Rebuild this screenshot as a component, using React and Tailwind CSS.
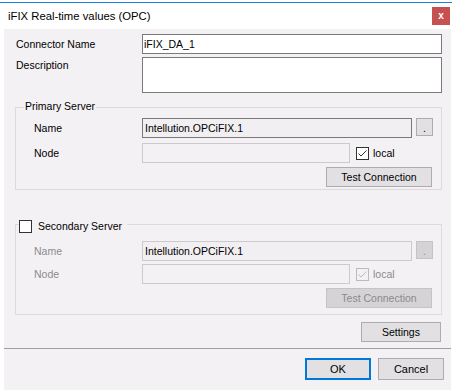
import React from "react";

const FONT = "font-['Liberation_Sans',Arial,sans-serif]";

function Check({ checked, disabled }) {
  const c = disabled ? "#bdbabd" : "#333333";
  return (
    <svg width="13" height="13" viewBox="0 0 13 13" className="shrink-0">
      <rect x="0.5" y="0.5" width="12" height="12" fill={disabled ? "#f4f1f4" : "#ffffff"} stroke={c} />
      {checked && (
        <path d="M2.5 6.5 L5 9 L10.5 3.5" fill="none" stroke={disabled ? "#bdbabd" : "#333333"} strokeWidth="1" />
      )}
    </svg>
  );
}

function Btn({ children, disabled, className = "" }) {
  return (
    <div
      className={
        "flex items-center justify-center border " +
        (disabled
          ? "bg-[#d6d3d6] border-[#c6c3c6] text-[#8c8a8c] "
          : "bg-[#e3e0e3] border-[#adadad] text-black ") +
        className
      }
    >
      {children}
    </div>
  );
}

function ServerRows({ disabled }) {
  const lbl = disabled ? "text-[#8c8a8c]" : "text-black";
  const nameBorder = disabled ? "border-[#cccacc]" : "border-[#7a7a7a]";
  return (
    <>
      <div className="flex items-start h-[20px]">
        <span className={"w-[108px] leading-[20px] " + lbl}>Name</span>
        <div
          className={
            "w-[270px] h-[20px] border bg-[#f2eff2] pl-[2px] flex items-center text-black " + nameBorder
          }
        >
          Intellution.OPCiFIX.1
        </div>
        <Btn disabled={disabled} className="ml-[4px] w-[17px] h-[18px] !items-end pb-[2px] leading-none">
          .
        </Btn>
      </div>
      <div className={"flex items-center h-[20px] " + (disabled ? "mt-[3px]" : "mt-[5px]")}>
        <span className={"w-[108px] " + lbl}>Node</span>
        <div className="w-[208px] h-[20px] border border-[#cccacc] bg-[#f4f1f4]" />
        <div className="ml-[6px] flex items-center gap-[4px]">
          <Check checked disabled={disabled} />
          <span className={lbl}>local</span>
        </div>
      </div>
      <div className="mt-[4px] flex justify-end pr-[9px]">
        <Btn disabled={disabled} className="w-[106px] h-[20px]">
          Test Connection
        </Btn>
      </div>
    </>
  );
}

export default function App() {
  return (
    <div className={"w-[455px] h-[390px] bg-white overflow-hidden text-[10.5px] leading-[13px] " + FONT}>
      <div className="h-[2px] w-[452px] bg-white" />
      <div className="h-[1px] w-[452px] bg-[#1883d7]" />
      <div className="h-[26px] w-[452px] flex items-center justify-between pl-[8px] pr-[2px]">
        <span className="text-[11.3px] text-black">iFIX Real-time values (OPC)</span>
        <div className="w-[18px] h-[18px] bg-[#c75050] flex items-center justify-center text-white font-bold text-[10px] leading-none pb-[1px]">
          x
        </div>
      </div>
      <div className="ml-[4px] w-[447px] h-[361px] bg-[#f4f1f4] pt-[5px]">
        <div className="ml-[11px] w-[427px]">
          <div className="flex items-center h-[20px]">
            <span className="w-[127px] pl-[1px] text-black">Connector Name</span>
            <div className="w-[300px] h-[20px] border border-[#7a7a7a] bg-white pl-[1px] flex items-center text-black">
              iFIX_DA_1
            </div>
          </div>
          <div className="flex items-start mt-[3px]">
            <span className="w-[127px] pl-[1px] pt-[2px] text-black">Description</span>
            <div className="w-[300px] h-[36px] border border-[#7a7a7a] bg-white" />
          </div>

          <div className="relative mt-[14px] h-[83px] border border-[#dcdadc] pt-[10px] pl-[18px]">
            <span className="absolute left-[8px] top-[-8px] bg-[#f4f1f4] px-[1px] text-black">Primary Server</span>
            <ServerRows />
          </div>

          <div className="relative mt-[34px] h-[91px] border border-[#dcdadc] pt-[16px] pl-[18px]">
            <div className="absolute left-[3px] top-[-5px] flex items-center gap-[6px] bg-[#f4f1f4] pr-[5px]">
              <Check />
              <span className="text-black">Secondary Server</span>
            </div>
            <ServerRows disabled />
          </div>

          <div className="mt-[7px] flex justify-end pr-[1px]">
            <Btn className="w-[80px] h-[20px]">Settings</Btn>
          </div>
        </div>
        <div className="mt-[6px] h-[1px] bg-[#a3a0a3]" />
        <div className="mt-[9px] flex justify-end gap-[7px] pr-[7px]">
          <div className="w-[66px] h-[22px] border-2 border-[#0078d7] bg-[#e3e0e3] flex items-center justify-center text-[11px] text-black">
            OK
          </div>
          <Btn className="w-[66px] h-[22px] text-[11px]">Cancel</Btn>
        </div>
      </div>
    </div>
  );
}
